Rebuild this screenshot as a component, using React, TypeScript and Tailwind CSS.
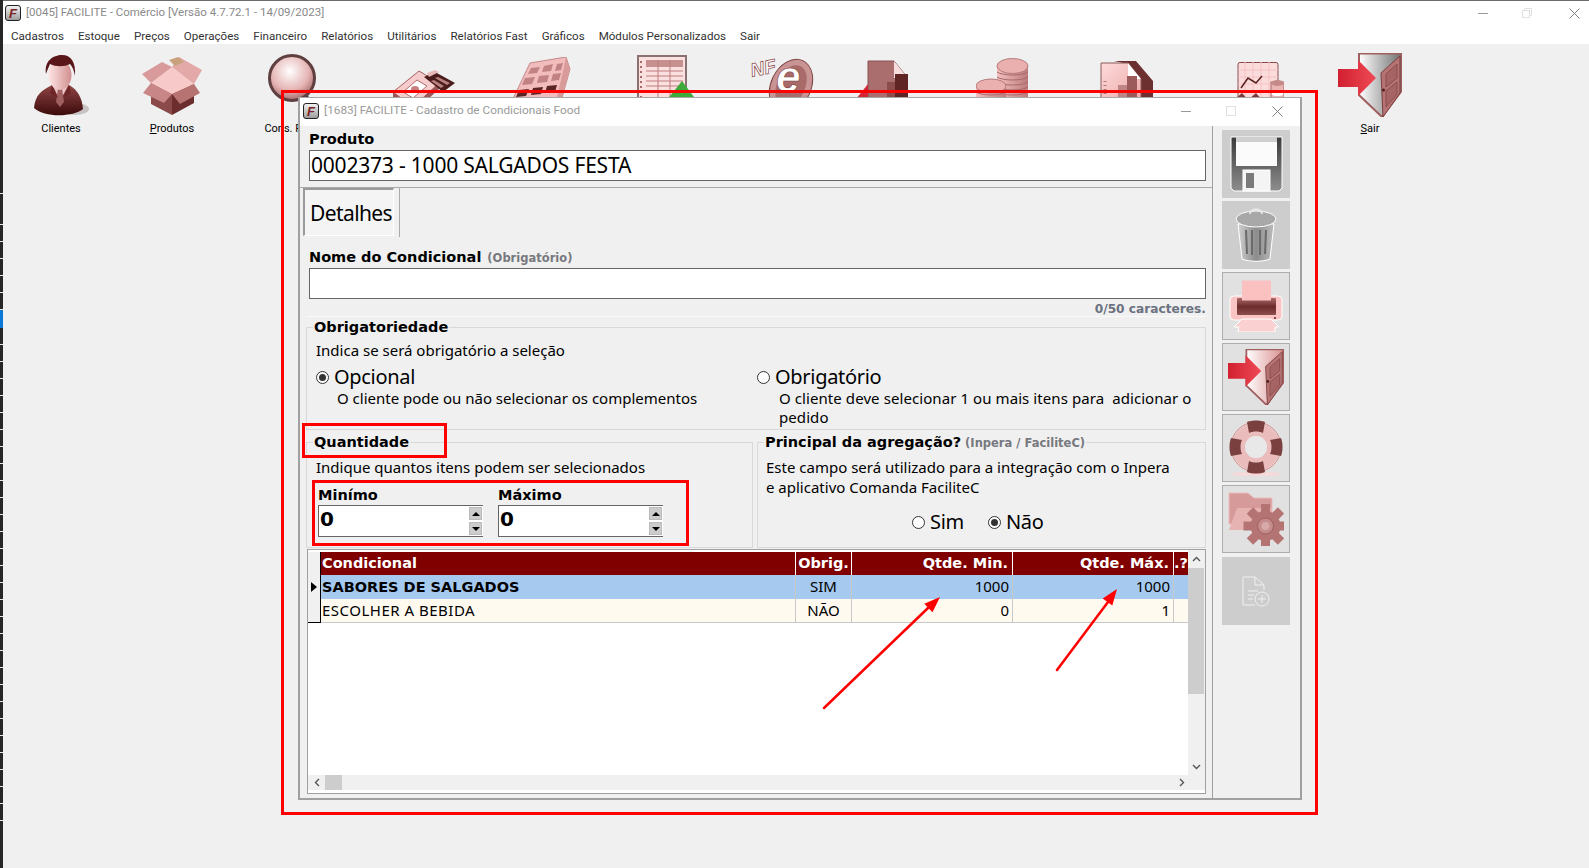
import React from "react"

const sans = "font-['Noto_Sans',sans-serif]"
const bold = "font-['DejaVu_Sans',sans-serif] font-bold"

const LogoF = () => (
  <svg width="16" height="16" viewBox="0 0 16 16" className="shrink-0">
    <defs>
      <linearGradient id="lg" x1="0" y1="0" x2="0" y2="1">
        <stop offset="0" stopColor="#f4f4f4" />
        <stop offset="1" stopColor="#9a9a9a" />
      </linearGradient>
    </defs>
    <rect x="0.5" y="0.5" width="15" height="15" rx="2.5" fill="url(#lg)" stroke="#222" />
    <text x="8" y="13" textAnchor="middle" fontSize="13" fontWeight="900" fontStyle="italic" fontFamily="Liberation Sans" fill="#7a1f24">F</text>
  </svg>
)

const WinMin = () => <svg width="10" height="10" className="block"><path d="M0 5.5h10" stroke="#9a9a9a" /></svg>
const WinMax = () => <svg width="10" height="10" className="block"><rect x="0.5" y="0.5" width="9" height="9" fill="none" stroke="#e0e0e0" /></svg>
const WinRestore = () => (
  <svg width="10" height="10" className="block">
    <path d="M2.5 2.5V.5h7v7h-2" fill="none" stroke="#e0e0e0" />
    <rect x="0.5" y="2.5" width="7" height="7" fill="none" stroke="#e0e0e0" />
  </svg>
)
const WinClose = () => <svg width="11" height="11" className="block"><path d="M.5.5l10 10M10.5.5l-10 10" stroke="#808080" /></svg>

const ManIcon = () => (
  <svg width="56" height="64" viewBox="0 0 56 64">
    <defs>
      <linearGradient id="manSuit" x1="0" y1="0" x2="0" y2="1">
        <stop offset="0" stopColor="#8f4545" />
        <stop offset="1" stopColor="#3c0a0a" />
      </linearGradient>
      <linearGradient id="manFace" x1="0" y1="0" x2="1" y2="0">
        <stop offset="0" stopColor="#ffe4e4" />
        <stop offset="1" stopColor="#d08f8f" />
      </linearGradient>
    </defs>
    <ellipse cx="42" cy="55" rx="14" ry="6" fill="#c9c4c4" />
    <path d="M1 54C2 41 9 36 19 31L36 31C45 36 49 44 50 55C40 63 12 64 1 54Z" fill="url(#manSuit)" />
    <path d="M19 30L27 47L36 30Z" fill="#eec4c4" />
    <path d="M25 34h4l2 14-4 5-4-5Z" fill="#a06060" />
    <path d="M19 31L25 44L17 39ZM36 31L30 44L38 39Z" fill="#6d2525" />
    <ellipse cx="27" cy="21" rx="11.5" ry="15" fill="url(#manFace)" />
    <path d="M13 20C11 7 20 1 29 1C38 1 43 8 42 22C41 16 39 12 37 10C31 13 23 13 17 10C16 13 14 16 13 20Z" fill="#5a1719" />
  </svg>
)

const BoxIcon = () => (
  <svg width="60" height="58" viewBox="0 0 60 58">
    <path d="M9 26L30 37V58L9 47Z" fill="#8a4a4a" />
    <path d="M30 37L52 27V46L30 58Z" fill="#6b2d2d" />
    <path d="M9 26L30 10L52 27L30 37Z" fill="#f7c9c9" />
    <path d="M9 26L0 17L20 5L30 10Z" fill="#d89a9a" />
    <path d="M30 10L37 0L60 13L52 27Z" fill="#e3a8a8" />
    <path d="M9 26L30 37L22 46L1 36Z" fill="#c98686" />
    <path d="M52 27L30 37L38 47L58 36Z" fill="#b77272" />
    <path d="M27 3L36 0L42 5L33 9Z" fill="#c9a27d" />
  </svg>
)

const LensIcon = () => (
  <svg width="52" height="60" viewBox="0 0 52 60">
    <defs>
      <radialGradient id="lens" cx="0.45" cy="0.35" r="0.7">
        <stop offset="0" stopColor="#fff" />
        <stop offset="0.6" stopColor="#e6b4b4" />
        <stop offset="1" stopColor="#9a5c5c" />
      </radialGradient>
    </defs>
    <path d="M36 42L50 58" stroke="#4a2020" strokeWidth="6" />
    <circle cx="24" cy="24" r="22.5" fill="url(#lens)" stroke="#5f3f3f" strokeWidth="3" />
  </svg>
)

const MoneyIcon = () => (
  <svg width="62" height="44" viewBox="0 0 62 44">
    <path d="M0 23L26 2L46 14L20 38Z" fill="#f6cccc" stroke="#a86060" />
    <path d="M0 23V30L20 44L46 20V14L20 38Z" fill="#9c5656" />
    <path d="M10 23L24 11L34 17L20 29Z" fill="#fff" stroke="#b56c6c" />
    <ellipse cx="22" cy="20" rx="4" ry="3" fill="#c77f7f" />
    <path d="M31 8L42 3L62 14L50 23Z" fill="#4a1c1c" />
    <path d="M42 9l3-1 12 6-3 2ZM38 12l3-1 10 6-3 2Z" fill="#b98080" />
    <path d="M34 4L42 1L46 3L36 8Z" fill="#e9b9b9" />
  </svg>
)

const CalcIcon = () => (
  <svg width="62" height="50" viewBox="0 0 62 50">
    <path d="M0 48L20 6L56 0L60 12L50 48Z" fill="#f2bcbc" stroke="#c48a8a" />
    <path d="M56 0L60 12L50 48L47 40L54 10Z" fill="#d99a9a" />
    <g fill="#c08282">
      <path d="M21 11l9-1-3 6-9 1ZM34 9l9-2-2 7-9 1ZM47 7l6-1-2 7-6 1Z" />
      <path d="M15 21l10-1-3 7-10 1ZM29 19l10-1-2 7-10 1ZM43 17l8-1-2 7-8 1Z" />
    </g>
    <g fill="#5a2525">
      <path d="M9 33l10-1-3 7-10 1ZM23 31l10-1-2 7-10 1ZM37 29l10-1-2 7-10 1Z" />
    </g>
  </svg>
)

const SheetIcon = () => (
  <svg width="60" height="46" viewBox="0 0 60 46">
    <rect x="1" y="1" width="48" height="45" fill="#fbe0e0" stroke="#8a7272" strokeWidth="2" />
    <rect x="9" y="5" width="37" height="7" fill="#c69090" />
    <path d="M9 16h37M9 21h37M9 26h37M9 31h37M9 36h37M21 5v40M33 5v40" stroke="#bd7c7c" />
    <path d="M4 6v38" stroke="#a86a6a" strokeWidth="2" strokeDasharray="2 3" />
    <path d="M45 26L60 46H29Z" fill="#3daa3a" />
  </svg>
)

const NfeIcon = () => (
  <svg width="64" height="64" viewBox="0 0 64 64">
    <ellipse cx="40" cy="28" rx="20" ry="28" transform="rotate(25 40 28)" fill="#c99494" stroke="#7d4343" />
    <ellipse cx="40" cy="28" rx="14" ry="22" transform="rotate(25 40 28)" fill="#a96a6a" />
    <text x="25" y="34" fontSize="44" fontStyle="italic" fontWeight="700" fontFamily="Liberation Sans" fill="#fff" stroke="#7d3b3b" strokeWidth="0.6">e</text>
    <text x="1" y="19" transform="rotate(-12 1 19)" fontSize="19" fontStyle="italic" fontWeight="900" fontFamily="Liberation Sans" fill="#fff" stroke="#8a4a4a" strokeWidth="0.7">NF</text>
  </svg>
)

const ReportIcon = () => (
  <svg width="56" height="44" viewBox="0 0 56 44">
    <path d="M16 1H42L56 18V44H16Z" fill="#ab6e6e" stroke="#8a5252" />
    <path d="M42 1L56 18H42Z" fill="#f6dede" />
    <path d="M35 22H43V44H35Z" fill="#8d4c4c" />
    <path d="M43 14H56V44H43Z" fill="#5f2424" />
    <path d="M0 44L16 24V44Z" fill="#d42636" />
  </svg>
)

const CoinsIcon = () => (
  <svg width="54" height="44" viewBox="0 0 54 44">
    <defs>
      <linearGradient id="coin" x1="0" y1="0" x2="1" y2="0">
        <stop offset="0" stopColor="#f3c0c0" />
        <stop offset="1" stopColor="#bd7a7a" />
      </linearGradient>
    </defs>
    <rect x="21" y="8" width="31" height="36" fill="url(#coin)" />
    <path d="M21 14c6 4 25 4 31 0M21 19c6 4 25 4 31 0M21 24c6 4 25 4 31 0M21 29c6 4 25 4 31 0M21 34c6 4 25 4 31 0" fill="none" stroke="#a86a6a" />
    <ellipse cx="36.5" cy="8" rx="15.5" ry="7.5" fill="#eab0b0" stroke="#b67a7a" />
    <rect x="0" y="28" width="30" height="16" fill="url(#coin)" />
    <path d="M0 34c6 4 24 4 30 0M0 40c6 4 24 4 30 0" fill="none" stroke="#a86a6a" />
    <ellipse cx="15" cy="28" rx="15" ry="7" fill="#eab0b0" stroke="#b67a7a" />
  </svg>
)

const DocIcon = () => (
  <svg width="54" height="40" viewBox="0 0 54 40">
    <defs>
      <linearGradient id="docFront" x1="0" y1="0" x2="1" y2="1">
        <stop offset="0" stopColor="#fddada" />
        <stop offset="1" stopColor="#eda8a8" />
      </linearGradient>
    </defs>
    <path d="M14 0H36L53 20V40H40V18L28 3Z" fill="#6d3030" />
    <path d="M1 2H28L41 18V40H1Z" fill="url(#docFront)" stroke="#8a5a5a" />
    <path d="M28 2L41 18H28Z" fill="#fff" />
    <path d="M18 24H27V40H18Z" fill="#bd8585" />
    <path d="M27 15H37V40H27Z" fill="#9c5a5a" />
    <path d="M5 20v20" stroke="#b57575" strokeDasharray="1 3" strokeWidth="3" />
  </svg>
)

const ChartIcon = () => (
  <svg width="50" height="38" viewBox="0 0 50 38">
    <rect x="4" y="0.5" width="40" height="37" rx="2" fill="#fbdcdc" stroke="#8a4a4a" />
    <path d="M4 8h40M4 15h40M4 22h40M4 29h40M11 0v38M19 0v38M27 0v38M35 0v38" stroke="#f6c0c0" />
    <path d="M7 26L14 16L22 21L28 14" fill="none" stroke="#5a2020" strokeWidth="1.5" />
    <path d="M0 38L8 31L14 38ZM14 38L22 31L28 38Z" fill="#7a3a3a" />
    <rect x="37" y="20" width="13" height="18" fill="#e9b5b5" stroke="#a86a6a" />
    <ellipse cx="43.5" cy="21" rx="6.5" ry="3" fill="#c78a8a" />
    <ellipse cx="43.5" cy="32" rx="6" ry="2" fill="#fff" />
  </svg>
)

const DoorIcon = ({ size, id, inner }: { size: number; id: string; inner: string }) => (
  <svg width={size} height={size} viewBox="0 0 64 64">
    <defs>
      <linearGradient id={id + "a"} x1="0" y1="0" x2="1" y2="0">
        <stop offset="0" stopColor="#d21f30" />
        <stop offset="1" stopColor="#ee4b55" />
      </linearGradient>
      <linearGradient id={id + "b"} x1="0" y1="0" x2="1" y2="0">
        <stop offset="0" stopColor="#fff" />
        <stop offset="1" stopColor={inner} />
      </linearGradient>
    </defs>
    <path d="M21 0.5H63.5V38L44 64L21 42Z" fill={"url(#" + id + "b)"} stroke="#a05f5f" strokeWidth="2" />
    <path d="M43 20L62 3V40L45 64Z" fill="#b67373" stroke="#7d3f3f" />
    <path d="M48 21L59 11V25L48 34ZM48 38L59 29V41L48 54Z" fill="#a66464" stroke="#8a4d4d" />
    <circle cx="45.5" cy="37" r="1.5" fill="#4a1c1c" />
    <path d="M0 16H20V7L38 25L20 43V34H0Z" fill={"url(#" + id + "a)"} />
  </svg>
)

const FloppyIcon = () => (
  <svg width="53" height="56" viewBox="0 0 53 56">
    <defs>
      <linearGradient id="flop" x1="0" y1="0" x2="0" y2="1">
        <stop offset="0" stopColor="#3a3a3a" />
        <stop offset="1" stopColor="#8e8e8e" />
      </linearGradient>
    </defs>
    <path d="M1 1H52V52L49 55H4L1 52Z" fill="url(#flop)" stroke="#fff" />
    <rect x="6" y="1" width="41" height="29" fill="#fbfbfb" />
    <rect x="6" y="1" width="41" height="5" fill="#cfcfcf" />
    <rect x="13" y="34" width="27" height="21" fill="#f4f4f4" stroke="#fff" />
    <rect x="16" y="37" width="8" height="15" fill="#7a7a7a" />
  </svg>
)

const TrashIcon = () => (
  <svg width="42" height="54" viewBox="0 0 42 54">
    <defs>
      <linearGradient id="trash" x1="0" y1="0" x2="1" y2="0">
        <stop offset="0" stopColor="#d0d0d0" />
        <stop offset="0.5" stopColor="#8c8c8c" />
        <stop offset="1" stopColor="#bdbdbd" />
      </linearGradient>
    </defs>
    <path d="M3 16H39L35 51C28 54 14 54 7 51Z" fill="url(#trash)" stroke="#fff" />
    <path d="M11 22l1 24M17 22v25M25 22v25M31 22l-1 24" stroke="#6a6a6a" strokeWidth="2" />
    <ellipse cx="21" cy="11" rx="20" ry="8" fill="#a8a8a8" stroke="#fff" />
    <path d="M15 6C15 0 27 0 27 6" fill="none" stroke="#e8e8e8" strokeWidth="2" />
  </svg>
)

const PrinterIcon = () => (
  <svg width="54" height="52" viewBox="0 0 54 52">
    <defs>
      <linearGradient id="slot" x1="0" y1="0" x2="0" y2="1">
        <stop offset="0" stopColor="#a86a6a" />
        <stop offset="0.5" stopColor="#6d2c2c" />
        <stop offset="1" stopColor="#8e4d4d" />
      </linearGradient>
    </defs>
    <rect x="1" y="16" width="52" height="24" rx="4" fill="#fbc4c4" stroke="#fff" />
    <rect x="8" y="18" width="39" height="17" rx="1" fill="url(#slot)" />
    <rect x="13" y="0.5" width="29" height="20" fill="#fbc0c0" />
    <path d="M13 39H42L50 47H46L46 52H9L10 47H5Z" fill="#fbd0d0" stroke="#fff" />
    <circle cx="46" cy="38" r="1" fill="#5a1f1f" />
  </svg>
)

const BuoyIcon = () => (
  <svg width="54" height="56" viewBox="0 0 54 56">
    <ellipse cx="27" cy="54" rx="25" ry="2" fill="#f8d8d8" />
    <circle cx="27" cy="27" r="25" fill="none" stroke="#d98a8a" strokeWidth="1" />
    <circle cx="27" cy="27" r="17.5" fill="none" stroke="#eabcbc" strokeWidth="13" />
    <path d="M18 2C23 0 31 0 36 2L34 13C30 11 24 11 20 13ZM18 52C23 54 31 54 36 52L34 41C30 43 24 43 20 41ZM2 18C0 23 0 31 2 36L13 34C11 30 11 24 13 20ZM52 18C54 23 54 31 52 36L41 34C43 30 43 24 41 20Z" fill="#7a4040" />
    <circle cx="27" cy="27" r="11" fill="#e8e8e8" />
  </svg>
)

const gearTeeth = [0, 45, 90, 135, 180, 225, 270, 315]

const FolderGearIcon = () => (
  <svg width="56" height="54" viewBox="0 0 56 54">
    <path d="M1 1H20L26 6H44V32H1Z" fill="#d69a9a" stroke="#e8bcbc" />
    <path d="M9 16H44L36 38H1Z" fill="#e6b2b2" />
    <g fill="#b57474">
      {gearTeeth.map((a) => (
        <rect key={a} x="33" y="12" width="9" height="10" transform={"rotate(" + a + " 37.5 34)"} />
      ))}
    </g>
    <circle cx="37.5" cy="34" r="15" fill="#b57474" />
    <circle cx="37.5" cy="34" r="8" fill="#c68c8c" stroke="#9c5f5f" />
    <circle cx="37.5" cy="34" r="4" fill="#d7a9a9" />
  </svg>
)

const DocAddIcon = () => (
  <svg width="28" height="31" viewBox="0 0 28 31" fill="none" stroke="#f0f0f0">
    <path d="M13 29H1V1H13L22 9V14" />
    <path d="M13 1V9H22M6 15H16M6 19H12M6 23H11" />
    <circle cx="20" cy="23" r="7" />
    <path d="M20 19v8M16 23h8" />
  </svg>
)

const tools = [
  { w: 116, top: 1, icon: <ManIcon />, label: <>Clientes</> },
  { w: 106, top: 4, icon: <BoxIcon />, label: <><u>P</u>rodutos</> },
  { w: 138, top: 1, icon: <LensIcon />, label: <>Cons. Preço</> },
  { w: 122, top: 16, icon: <MoneyIcon />, label: null },
  { w: 112, top: 4, icon: <CalcIcon />, label: null },
  { w: 140, top: 2, icon: <SheetIcon />, label: null },
  { w: 92, top: 5, icon: <NfeIcon />, label: null },
  { w: 102, top: 7, icon: <ReportIcon />, label: null },
  { w: 144, top: 5, icon: <CoinsIcon />, label: null },
  { w: 104, top: 8, icon: <DocIcon />, label: null },
  { w: 159, top: 9, icon: <ChartIcon />, label: null },
  { w: 64, top: 0, icon: <DoorIcon size={64} id="d1" inner="#6f6f6f" />, label: <><u>S</u>air</> },
]

const menu = ["Cadastros", "Estoque", "Preços", "Operações", "Financeiro", "Relatórios", "Utilitários", "Relatórios Fast", "Gráficos", "Módulos Personalizados", "Sair"]

const Radio = ({ checked }: { checked?: boolean }) => (
  <span className="w-[13px] h-[13px] rounded-full border border-[#333] bg-white flex items-center justify-center shrink-0">
    {checked && <span className="w-[7px] h-[7px] rounded-full bg-[#333]" />}
  </span>
)

const Spin = ({ label }: { label: string }) => (
  <div className="w-[165px]">
    <div className={`${bold} text-[14.5px] leading-[20px] text-black h-[20px]`}>{label}</div>
    <div className="h-[32px] bg-white border-t border-l border-b border-[#666] flex justify-between">
      <span className={`${bold} text-[20px] leading-[26px] pl-[1px] text-black`}>0</span>
      <div className="flex flex-col gap-[2px] pt-[1px] pr-[1px]">
        <div className="w-[13px] h-[13px] bg-[#ccc] border border-[#bbb] flex items-center justify-center">
          <span className="border-x-[4px] border-x-transparent border-b-[4px] border-b-black" />
        </div>
        <div className="w-[13px] h-[13px] bg-[#ccc] border border-[#bbb] flex items-center justify-center">
          <span className="border-x-[4px] border-x-transparent border-t-[4px] border-t-black" />
        </div>
      </div>
    </div>
  </div>
)

const gridCols = "grid grid-cols-[13px_475px_56px_161px_161px_14px]"

const GridRow = ({ bg, mark, strong, cells }: { bg: string; mark?: boolean; strong?: boolean; cells: string[] }) => (
  <div className={`${gridCols} h-[24px] text-[15px] leading-[23px] text-black`}>
    <div className="bg-[#f0f0f0] border-r border-b border-black flex items-center pl-[3px]">
      {mark && <span className="border-y-[5px] border-y-transparent border-l-[6px] border-l-black" />}
    </div>
    <div className={`${bg} border-r border-b border-[#c8c8c8] pl-[1px] ${strong ? bold + " text-[14.5px] leading-[24px]" : "tracking-[0.5px]"}`}>{cells[0]}</div>
    <div className={`${bg} border-r border-b border-[#c8c8c8] text-center`}>{cells[1]}</div>
    <div className={`${bg} border-r border-b border-[#c8c8c8] text-right pr-[3px]`}>{cells[2]}</div>
    <div className={`${bg} border-r border-b border-[#c8c8c8] text-right pr-[3px]`}>{cells[3]}</div>
    <div className={`${bg} border-b border-[#c8c8c8]`} />
  </div>
)

const sideButtons = [
  { cls: "bg-[#cdcdcd]", icon: <FloppyIcon /> },
  { cls: "bg-[#cdcdcd]", icon: <TrashIcon /> },
  { cls: "bg-[#e1e1e1] border border-[#adadad]", icon: <PrinterIcon /> },
  { cls: "bg-[#e1e1e1] border border-[#adadad]", icon: <DoorIcon size={56} id="d2" inner="#d98f8f" /> },
  { cls: "bg-[#e1e1e1] border border-[#adadad]", icon: <BuoyIcon /> },
  { cls: "bg-[#e1e1e1] border border-[#adadad]", icon: <FolderGearIcon /> },
  { cls: "bg-[#cdcdcd] mt-[1px]", icon: <DocAddIcon /> },
]

export default function App() {
  return (
    <div className={`relative w-[1589px] h-[868px] overflow-hidden flex bg-[#f0f0f0] ${sans}`}>
      {/* desktop edge behind the window */}
      <div className="w-[3px] h-full bg-[#262626] flex flex-col shrink-0">
        <div className="h-[194px] border-b border-[#e8e8e8]" />
        <div className="h-[31px] border-b border-[#e8e8e8]" />
        {Array.from({ length: 5 }).map((_, i) => (
          <div key={i} className="h-[17px] border-b border-[#e8e8e8]" />
        ))}
        <div className="h-[18px] bg-[#0a78d7]" />
        {Array.from({ length: 29 }).map((_, i) => (
          <div key={i} className="h-[17px] border-b border-[#e8e8e8]" />
        ))}
      </div>

      <div className="flex-1 min-w-0 flex flex-col">
        <div className="h-[1px] bg-[#6b6b6b]" />
        <div className="h-[43px] bg-white flex flex-col">
          <div className="h-[24px] flex items-center pl-[2px]">
            <LogoF />
            <span className="ml-[5px] text-[11.5px] text-[#8a8a8a] font-['Roboto',sans-serif]">[0045] FACILITE - Comércio [Versão 4.7.72.1 - 14/09/2023]</span>
            <div className="ml-auto flex items-center">
              <div className="w-[44px] flex justify-center"><WinMin /></div>
              <div className="w-[44px] flex justify-center"><WinRestore /></div>
              <div className="w-[10px]" />
              <div className="w-[30px] flex justify-center"><WinClose /></div>
            </div>
          </div>
          <div className="flex gap-[14px] pl-[8px] pt-[3px] text-[11.6px] leading-[16px] text-[#333] font-['Roboto',sans-serif]">
            {menu.map((m) => <span key={m}>{m}</span>)}
          </div>
        </div>
        <div className="flex pt-[9px] font-['Roboto',sans-serif] text-[11px] leading-[14px] text-black">
          {tools.map((t, i) => (
            <div key={i} className="flex flex-col items-center shrink-0" style={{ width: t.w }}>
              <div className="h-[69px]" style={{ paddingTop: t.top }}>{t.icon}</div>
              {t.label && <span className="whitespace-nowrap">{t.label}</span>}
            </div>
          ))}
        </div>
      </div>

      {/* dialog window */}
      <div className="absolute left-[298px] top-[97px] w-[1004px] h-[703px] bg-[#f0f0f0] border-t border-x-2 border-b-2 border-t-[#a8a8a8] border-x-[#a0a0a0] border-b-[#a0a0a0] flex flex-col">
        <div className="h-[28px] pb-[2px] bg-white flex items-center pl-[3px] shrink-0">
          <LogoF />
          <span className="ml-[5px] text-[11.8px] text-[#9a9a9a] font-['Roboto',sans-serif]">[1683] FACILITE - Cadastro de Condicionais Food</span>
          <div className="ml-auto flex items-center pr-[12px]">
            <div className="w-[45px] flex justify-center"><WinMin /></div>
            <div className="w-[46px] flex justify-center"><WinMax /></div>
            <div className="w-[12px]" />
            <div className="w-[22px] flex justify-center"><WinClose /></div>
          </div>
        </div>

        <div className="flex-1 flex min-h-0">
          <div className="w-[912px] shrink-0 flex flex-col text-black">
            {/* produto */}
            <div className="h-[62px] pl-[9px] pt-[3px] border-b border-[#aaa] shrink-0">
              <div className={`${bold} text-[14.5px] leading-[20px] h-[20px]`}>Produto</div>
              <div className="mt-[1px] w-[897px] h-[31px] bg-white border border-[#666] pl-[1px] text-[21px] leading-[29px] tracking-[-0.2px]">0002373 - 1000 SALGADOS FESTA</div>
            </div>

            {/* aba */}
            <div className="h-[49px] flex shrink-0">
              <div className="ml-[3px] w-[91px] h-[48px] bg-[#f4f4f4] border-l-2 border-t-2 border-r border-b border-l-[#9a9a9a] border-t-[#9a9a9a] border-r-white border-b-white text-[21px] tracking-[-0.6px] leading-[46px] pl-[5px]">Detalhes</div>
              <div className="ml-[5px] w-[1px] bg-[#aaa]" />
            </div>

            <div className="pl-[9px] mt-[10px] h-[20px] flex items-baseline gap-[6px] shrink-0">
              <span className={`${bold} text-[14.5px] leading-[20px]`}>Nome do Condicional</span>
              <span className={`${bold} text-[11.5px] text-[#77797f]`}>(Obrigatório)</span>
            </div>
            <div className="ml-[9px] mt-[1px] w-[897px] h-[31px] bg-white border border-[#666] shrink-0" />
            <div className={`${bold} mt-[2px] w-[906px] h-[15px] text-right text-[12.2px] leading-[16px] text-[#6b7280] shrink-0`}>0/50 caracteres.</div>

            {/* obrigatoriedade */}
            <div className="ml-[6px] w-[900px] h-[1px] bg-[#fafafa] shrink-0" />
            <fieldset className="ml-[6px] w-[900px] h-[113px] border border-[#d9d9d9] shrink-0">
              <legend className={`${bold} ml-[6px] px-[1px] text-[14.5px] leading-[20px]`}>Obrigatoriedade</legend>
              <div className="pl-[9px] mt-[3px] text-[15px] leading-[20px]">Indica se será obrigatório a seleção</div>
              <div className="flex pl-[9px] mt-[4px]">
                <div className="w-[441px]">
                  <div className="h-[26px] flex items-center gap-[5px] text-[20px] tracking-[-0.3px]"><Radio checked />Opcional</div>
                  <div className="pl-[21px] text-[15px] leading-[16px]">O cliente pode ou não selecionar os complementos</div>
                </div>
                <div className="flex-1">
                  <div className="h-[26px] flex items-center gap-[5px] text-[20px] tracking-[-0.3px]"><Radio />Obrigatório</div>
                  <div className="pl-[22px] -mt-[1px] text-[15px] leading-[19px] tracking-[0.08px]">O cliente deve selecionar 1 ou mais itens para&nbsp; adicionar o pedido</div>
                </div>
              </div>
            </fieldset>

            <div className="mt-[2px] ml-[6px] w-[900px] h-[116px] flex gap-[4px] shrink-0">
              <fieldset className="w-[447px] h-full border border-[#d9d9d9]">
                <legend className={`${bold} ml-[6px] px-[1px] text-[14.5px] leading-[20px]`}>Quantidade</legend>
                <div className="pl-[9px] mt-[5px] text-[15px] leading-[20px]">Indique quantos itens podem ser selecionados</div>
                <div className="flex gap-[15px] pl-[11px] mt-[8px]">
                  <Spin label="Minímo" />
                  <Spin label="Máximo" />
                </div>
              </fieldset>
              <fieldset className="flex-1 h-full border border-[#d9d9d9]">
                <legend className="ml-[6px] px-[1px] h-[20px] leading-[20px] whitespace-nowrap flex items-baseline">
                  <span className={`${bold} text-[14.5px] mr-[4px]`}>Principal da agregação?</span>
                  <span className={`${bold} text-[11.5px] text-[#77797f]`}>(Inpera / FaciliteC)</span>
                </legend>
                <div className="pl-[8px] pr-[30px] mt-[5px] text-[15px] leading-[20px]">Este campo será utilizado para a integração com o Inpera e aplicativo Comanda FaciliteC</div>
                <div className="flex mt-[12px] h-[26px] items-center text-[20px] tracking-[-0.3px] pl-[154px]">
                  <Radio /><span className="ml-[5px]">Sim</span>
                  <span className="w-[24px]" />
                  <Radio checked /><span className="ml-[5px]">Não</span>
                </div>
              </fieldset>
            </div>

            {/* grade */}
            <div className="mt-[1px] ml-[7px] w-[899px] h-[245px] border border-[#a0a0a0] bg-white flex flex-col shrink-0">
              <div className="flex-1 flex min-h-0">
                <div className="w-[880px] shrink-0 flex flex-col">
                  <div className={`${gridCols} h-[25px] pt-[2px] ${bold} text-[14.5px] leading-[23px] text-white`}>
                    <div className="bg-[#f0f0f0] border-r border-b-2 border-black" />
                    <div className="bg-[#800000] border-b-2 border-b-black border-r border-r-white pl-[1px]">Condicional</div>
                    <div className="bg-[#800000] border-b-2 border-b-black border-r border-r-white text-center">Obrig.</div>
                    <div className="bg-[#800000] border-b-2 border-b-black border-r border-r-white text-right pr-[4px]">Qtde. Min.</div>
                    <div className="bg-[#800000] border-b-2 border-b-black border-r border-r-white text-right pr-[4px]">Qtde. Máx.</div>
                    <div className="bg-[#800000] border-b-2 border-b-black overflow-hidden text-right">.?</div>
                  </div>
                  <GridRow bg="bg-[#a6c9ef]" mark strong cells={["SABORES DE SALGADOS", "SIM", "1000", "1000"]} />
                  <GridRow bg="bg-[#fffaf0]" cells={["ESCOLHER A BEBIDA", "NÃO", "0", "1"]} />
                </div>
                <div className="w-[16px] bg-[#f0f0f0] flex flex-col shrink-0">
                  <div className="h-[18px] flex items-center justify-center text-[#555]">
                    <svg width="9" height="6" viewBox="0 0 9 6" fill="none" stroke="#555" strokeWidth="1.4"><path d="M1 5l3.5-3.5L8 5" /></svg>
                  </div>
                  <div className="h-[126px] bg-[#cdcdcd]" />
                  <div className="mt-auto h-[17px] flex items-center justify-center">
                    <svg width="9" height="6" viewBox="0 0 9 6" fill="none" stroke="#555" strokeWidth="1.4"><path d="M1 1l3.5 3.5L8 1" /></svg>
                  </div>
                </div>
                <div className="flex-1 bg-[#f0f0f0]" />
              </div>
              <div className="h-[15px] bg-[#f0f0f0] flex items-center mb-[3px] shrink-0">
                <div className="w-[17px] flex justify-center">
                  <svg width="6" height="9" viewBox="0 0 6 9" fill="none" stroke="#555" strokeWidth="1.4"><path d="M5 1L1.5 4.5 5 8" /></svg>
                </div>
                <div className="w-[17px] h-full bg-[#cdcdcd]" />
                <div className="w-[837px]" />
                <svg width="6" height="9" viewBox="0 0 6 9" fill="none" stroke="#555" strokeWidth="1.4"><path d="M1 1l3.5 3.5L1 8" /></svg>
              </div>
            </div>
          </div>

          {/* barra lateral */}
          <div className="flex-1 border-l border-[#a0a0a0] pl-[9px] pt-[4px] flex flex-col gap-[3px]">
            {sideButtons.map((b, i) => (
              <div key={i} className={`w-[68px] h-[68px] flex items-center justify-center shrink-0 ${b.cls}`}>{b.icon}</div>
            ))}
          </div>
        </div>
      </div>

      {/* marcações em vermelho */}
      <div className="absolute left-[281px] top-[90px] w-[1037px] h-[725px] border-[3px] border-[#f00]" />
      <div className="absolute left-[302px] top-[423px] w-[145px] h-[35px] border-[3px] border-[#f00]" />
      <div className="absolute left-[312px] top-[480px] w-[377px] h-[66px] border-[3px] border-[#f00]" />
      <svg className="absolute left-0 top-0 pointer-events-none" width="1589" height="868">
        <path d="M824 708L928 608M1057 670L1108 602" stroke="#f00" strokeWidth="2.5" strokeLinecap="round" />
        <path d="M940 597L924.3 603.7L932.5 612.3ZM1117 589L1102.7 598.4L1112.3 605.6Z" fill="#f00" />
      </svg>
    </div>
  )
}
